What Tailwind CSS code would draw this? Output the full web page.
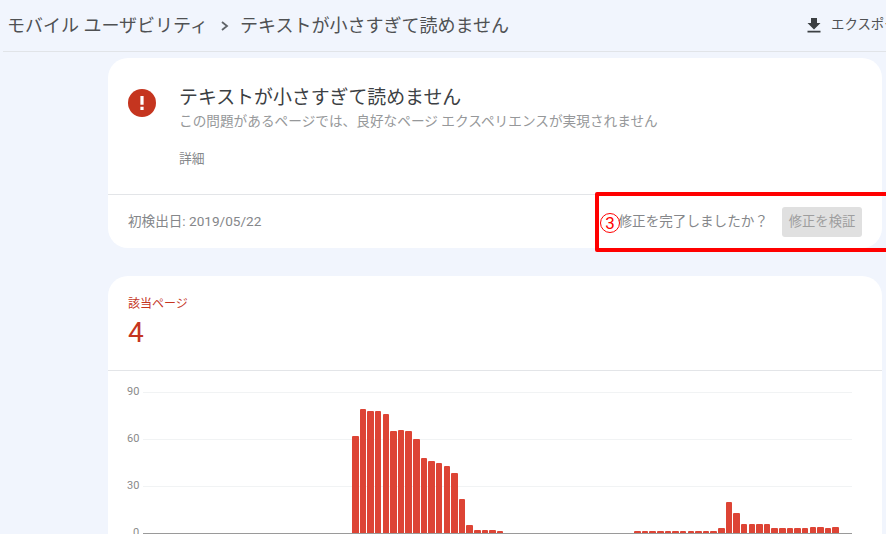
<!DOCTYPE html>
<html lang="ja">
<head>
  <meta charset="UTF-8">
  <title>テキストが小さすぎて読めません</title>
  <script src="https://cdn.jsdelivr.net/npm/@tailwindcss/browser@4"></script>
</head>
<body class="w-[886px] h-[534px] overflow-hidden bg-[#f1f5fd] font-[Roboto,'Noto_Sans_CJK_JP',sans-serif]">
  <!-- Header -->
  <header class="h-[52px] ml-[3px] pl-1 flex items-center justify-between border-b border-[#e1e4e8] whitespace-nowrap">
    <div class="flex items-center text-[18px] text-[#4f5153]">
      <span>モバイル ユーザビリティ</span>
      <svg class="w-[14px] h-[14px] ml-[9px] mr-[9px]" viewBox="0 0 14 14" fill="none" stroke="#5f6368" stroke-width="1.8"><path d="M5 3l5 4-5 4"/></svg>
      <span>テキストが小さすぎて読めません</span>
    </div>
    <div class="flex items-center w-[79px] shrink-0 overflow-hidden text-[13.4px] text-[#4f5153]">
      <svg class="w-[14px] h-[16px] shrink-0 mr-[10px]" viewBox="0 0 14 16" fill="#3c4043"><path d="M4 1h6v5h3.500L7 12.500.5 6H4zM.5 13.800h13V15.500H.5z"/></svg>
      <span>エクスポート</span>
    </div>
  </header>

  <main class="ml-[108px] w-[774px] pt-[6px]">
    <!-- Issue card -->
    <section class="relative h-[190px] bg-white rounded-[20px]">
      <div class="h-[137px] flex pl-5 pt-[30px] border-b border-[#e3e5e8]">
        <div class="w-7 h-7 mt-[1px] rounded-full bg-[#c5351f] flex items-center justify-center shrink-0">
          <svg class="w-1 h-[14px]" viewBox="0 0 4 14" fill="#fff"><path d="M.4 0h3.200v8.800H.4zM.4 10.800h3.200V14H.4z"/></svg>
        </div>
        <div class="ml-[23px]">
          <h1 class="text-[18.9px] leading-[20px] text-[#3c4043] font-normal">テキストが小さすぎて読めません</h1>
          <p class="mt-[3px] text-[13.67px] leading-[20px] text-[#96989a]">この問題があるページでは、良好なページ エクスペリエンスが実現されません</p>
          <p class="mt-[18px] text-[12.8px] leading-[20px] text-[#85878a]">詳細</p>
        </div>
      </div>
      <div class="h-[53px] flex items-center justify-between pl-5 pr-5">
        <span class="text-[13.6px] text-[#85878a]">初検出日: 2019/05/22</span>
        <div class="flex items-center">
          <span class="text-[13.6px] text-[#85878a] mr-[14px]">修正を完了しましたか？</span>
          <button class="w-20 h-[30px] rounded-[3px] bg-[#e0e0e0] text-[13.3px] text-[#9e9e9e]">修正を検証</button>
        </div>
      </div>
      <!-- Annotation over the card -->
      <div class="absolute left-[487px] top-[134px] w-[295px] h-[60px] border-[4px] border-[#ff0000] rounded-[2px]"></div>
      <div class="absolute left-[492px] top-[155px] w-5 h-5 rounded-full border border-[#ff0000] text-[#ff0000] text-[17px] leading-[18px] text-center">3</div>
    </section>

    <!-- Chart card -->
    <section class="mt-7 h-[258px] overflow-hidden bg-white rounded-t-[20px]">
      <div class="h-[95px] pl-5 pt-5 border-b border-[#e3e5e8]">
        <p class="text-[12px] leading-4 text-[#c5351f]">該当ページ</p>
        <p class="mt-[5px] text-[28px] leading-[32px] text-[#c5351f]">4</p>
      </div>
      <div class="relative h-[163px] ml-[35px] w-[709px]">
        <div class="absolute left-0 right-0 top-[21px] border-t border-[#f1f3f4]"></div>
        <div class="absolute left-0 right-0 top-[68px] border-t border-[#f1f3f4]"></div>
        <div class="absolute left-0 right-0 top-[115px] border-t border-[#f1f3f4]"></div>
        <div class="absolute left-[-16px] top-[14px] text-[11px] leading-[14px] text-[#8a8a8a]">90</div>
        <div class="absolute left-[-16px] top-[61px] text-[11px] leading-[14px] text-[#8a8a8a]">60</div>
        <div class="absolute left-[-16px] top-[108px] text-[11px] leading-[14px] text-[#8a8a8a]">30</div>
        <div class="absolute left-[-10px] top-[155px] text-[11px] leading-[14px] text-[#8a8a8a]">0</div>
        <div id="bars" class="absolute left-[209px] top-0 h-[162px] flex items-end gap-[1.14px]"></div>
        <div class="absolute left-0 right-0 top-[162px] border-t border-[#9a9a9a]"></div>
      </div>
    </section>
  </main>

  <script>
    var values = [62,79,78,78,76,65,66,65,60,48,46,45,43,38,22,5,2,2,2,1,
      0,0,0,0,0,0,0,0,0,0,0,0,0,0,0,0,0,
      1,1,1,1,1,1,1,1,1,1,1,3,20,13,6,6,6,6,3,3,3,3,3,4,4,3,4];
    var bars = document.getElementById('bars');
    values.forEach(function (v) {
      var bar = document.createElement('div');
      bar.className = 'w-[6.5px] shrink-0 bg-[#dd4435] rounded-t-[1px]';
      bar.style.height = (v * 47 / 30) + 'px';
      bars.appendChild(bar);
    });
  </script>
</body>
</html>
